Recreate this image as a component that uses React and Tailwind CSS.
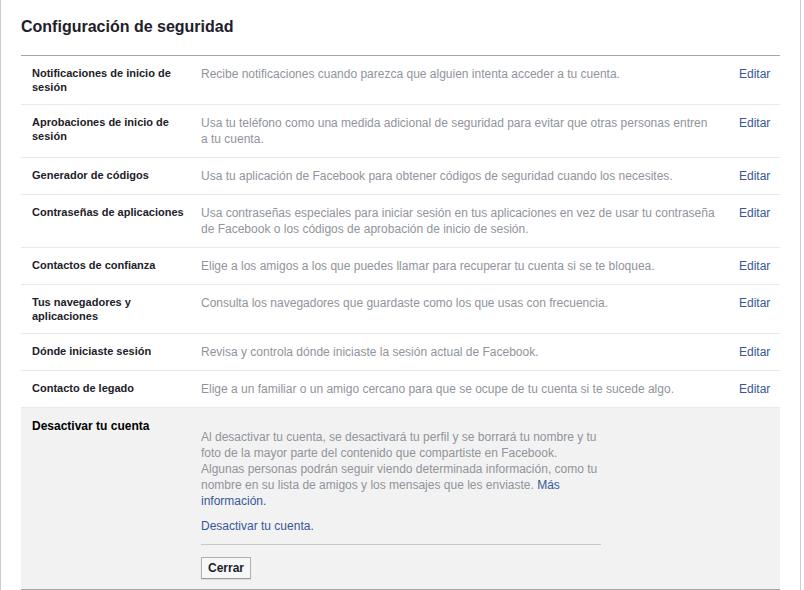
const rows = [
  {
    label: 'Notificaciones de inicio de sesión',
    desc: 'Recibe notificaciones cuando parezca que alguien intenta acceder a tu cuenta.',
  },
  {
    label: 'Aprobaciones de inicio de sesión',
    desc: 'Usa tu teléfono como una medida adicional de seguridad para evitar que otras personas entren a\u00a0tu cuenta.',
  },
  {
    label: 'Generador de códigos',
    desc: 'Usa tu aplicación de Facebook para obtener códigos de seguridad cuando los necesites.',
  },
  {
    label: 'Contraseñas de aplicaciones',
    desc: 'Usa contraseñas especiales para iniciar sesión en tus aplicaciones en vez de usar tu contraseña de Facebook o los códigos de aprobación de inicio de sesión.',
  },
  {
    label: 'Contactos de confianza',
    desc: 'Elige a los amigos a los que puedes llamar para recuperar tu cuenta si se te bloquea.',
  },
  {
    label: 'Tus navegadores y aplicaciones',
    desc: 'Consulta los navegadores que guardaste como los que usas con frecuencia.',
  },
  {
    label: 'Dónde iniciaste sesión',
    desc: 'Revisa y controla dónde iniciaste la sesión actual de Facebook.',
  },
  {
    label: 'Contacto de legado',
    desc: 'Elige a un familiar o un amigo cercano para que se ocupe de tu cuenta si te sucede algo.',
  },
];

const SettingRow = ({ label, desc }) => (
  <div className="flex border-b border-[#e9e9e9] py-[10px]">
    <div className="w-[180px] shrink-0 pl-[11px] pr-[11px] text-[11px] font-bold leading-[14px] text-[#1d2129]">
      {label}
    </div>
    <div className="flex-1 pr-[18px] text-[12px] leading-[16px] text-[#90949c]">{desc}</div>
    <a href="#" className="w-[41px] shrink-0 text-[12px] leading-[16px] text-[#365899]">
      Editar
    </a>
  </div>
);

export default function App() {
  return (
    <div className="min-h-screen bg-white font-['Liberation_Sans',Arial,sans-serif]">
      <div className="mr-[3px] min-h-[590px] border-x border-[#cccccc] px-[20px]">
        <h1 className="pt-[17px] pb-[18px] text-[16px] font-bold leading-[20px] text-[#1d2129]">
          Configuración de seguridad
        </h1>

        <div className="border-t border-[#a6a6a6]">
          {rows.map((row) => (
            <SettingRow key={row.label} {...row} />
          ))}

          <div className="flex border-b border-[#a6a6a6] bg-[#f2f2f2] pt-[11px] pb-[10px]">
            <div className="w-[180px] shrink-0 pl-[11px] text-[12px] font-bold leading-[14px] text-black">
              Desactivar tu cuenta
            </div>
            <div className="w-[400px] pt-[10px]">
              <p className="text-[12px] leading-[16px] text-[#90949c]">
                Al desactivar tu cuenta, se desactivará tu perfil y se borrará tu nombre y tu foto de la
                mayor parte del contenido que compartiste en Facebook. Algunas personas podrán seguir
                viendo determinada información, como tu nombre en su lista de amigos y los mensajes que
                les enviaste.{' '}
                <a href="#" className="text-[#365899]">
                  Más información.
                </a>
              </p>
              <a href="#" className="mt-[9px] block text-[12px] leading-[16px] text-[#365899]">
                Desactivar tu cuenta.
              </a>
              <div className="mt-[10px] border-t border-[#c8c8c8] pt-[10px]">
                <button className="h-[22px] border border-[#b0b0b0] border-b-[#999] bg-[#f6f7f9] px-[6px] text-[12px] font-bold leading-[20px] text-[#1d2129] shadow-[0_1px_1px_rgba(0,0,0,0.08)]">
                  Cerrar
                </button>
              </div>
            </div>
          </div>
        </div>
      </div>
    </div>
  );
}
